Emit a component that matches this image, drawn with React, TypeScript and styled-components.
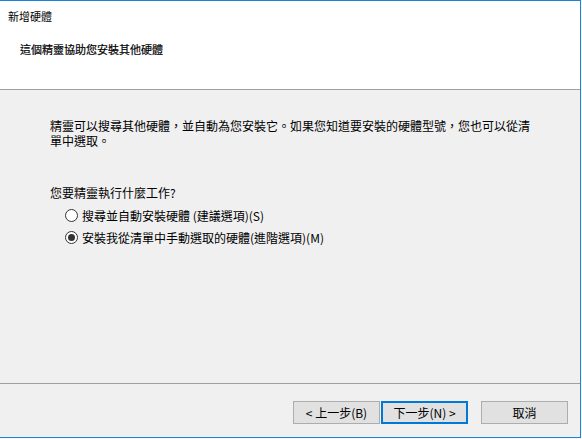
import React, { useState } from 'react'
import styled, { createGlobalStyle } from 'styled-components'

const GlobalStyle = createGlobalStyle`
  html, body {
    margin: 0;
    padding: 0;
    background: #f7f7f7;
  }
  body {
    font-family: "Noto Sans CJK TC", "Liberation Sans", sans-serif;
    color: #000;
  }
`

const Window = styled.div`
  width: 580px;
  height: 436px;
  border-top: 1px solid #1883d7;
  border-right: 1px solid #1883d7;
  border-bottom: 1px solid #1883d7;
  display: flex;
  flex-direction: column;
  background: #f0f0f0;
`

const Header = styled.div`
  height: 89px;
  box-sizing: border-box;
  background: #fff;
  border-bottom: 1px solid #a0a0a0;
  padding: 7px 0 0 8px;
`

const Title = styled.div`
  font-size: 11px;
  line-height: 16px;
`

const Subtitle = styled.div`
  font-size: 11px;
  line-height: 16px;
  margin: 17px 0 0 12px;
  -webkit-text-stroke: 0.2px #000;
`

const Content = styled.div`
  flex: 1;
  padding: 28px 0 0 50px;
  font-size: 12px;
`

const Paragraph = styled.p`
  margin: 0;
  width: 486px;
  line-height: 15px;
`

const Question = styled.div`
  margin-top: 37px;
  line-height: 15px;
`

const Options = styled.div`
  margin: 5px 0 0 15px;
  display: flex;
  flex-direction: column;
`

const OptionRow = styled.label`
  height: 21.5px;
  display: flex;
  align-items: center;
  gap: 4px;
  cursor: default;
`

const RadioCircle = styled.span<{ $checked: boolean }>`
  width: 13px;
  height: 13px;
  box-sizing: border-box;
  border: 1px solid #333;
  border-radius: 50%;
  background: #fff;
  display: flex;
  align-items: center;
  justify-content: center;
  &::after {
    content: '';
    width: 7px;
    height: 7px;
    border-radius: 50%;
    background: #333;
    display: ${(p) => (p.$checked ? 'block' : 'none')};
  }
`

const Footer = styled.div`
  height: 36px;
  border-top: 1px solid #a0a0a0;
  display: flex;
  justify-content: flex-end;
  align-items: flex-start;
  padding: 17px 12px 0 0;
`

const Button = styled.button<{ $focused?: boolean }>`
  width: 87px;
  height: 23px;
  box-sizing: border-box;
  border: ${(p) => (p.$focused ? '2px solid #0078d7' : '1px solid #adadad')};
  background: #e1e1e1;
  font-family: inherit;
  font-size: 12px;
  color: #000;
  padding: 0;
  line-height: 1;
  margin-left: ${(p) => (p.$focused ? '1px' : '0')};
`

const CancelButton = styled(Button)`
  margin-left: 13px;
`

function App() {
  const [mode, setMode] = useState('manual')

  return (
    <>
      <GlobalStyle />
      <Window>
        <Header>
          <Title>新增硬體</Title>
          <Subtitle>這個精靈協助您安裝其他硬體</Subtitle>
        </Header>
        <Content>
          <Paragraph>
            精靈可以搜尋其他硬體，並自動為您安裝它。如果您知道要安裝的硬體型號，您也可以從清單中選取。
          </Paragraph>
          <Question>您要精靈執行什麼工作?</Question>
          <Options>
            <OptionRow onClick={() => setMode('auto')}>
              <RadioCircle $checked={mode === 'auto'} />
              搜尋並自動安裝硬體 (建議選項)(S)
            </OptionRow>
            <OptionRow onClick={() => setMode('manual')}>
              <RadioCircle $checked={mode === 'manual'} />
              安裝我從清單中手動選取的硬體(進階選項)(M)
            </OptionRow>
          </Options>
        </Content>
        <Footer>
          <Button>&lt; 上一步(B)</Button>
          <Button $focused>下一步(N) &gt;</Button>
          <CancelButton>取消</CancelButton>
        </Footer>
      </Window>
    </>
  )
}

export default App
